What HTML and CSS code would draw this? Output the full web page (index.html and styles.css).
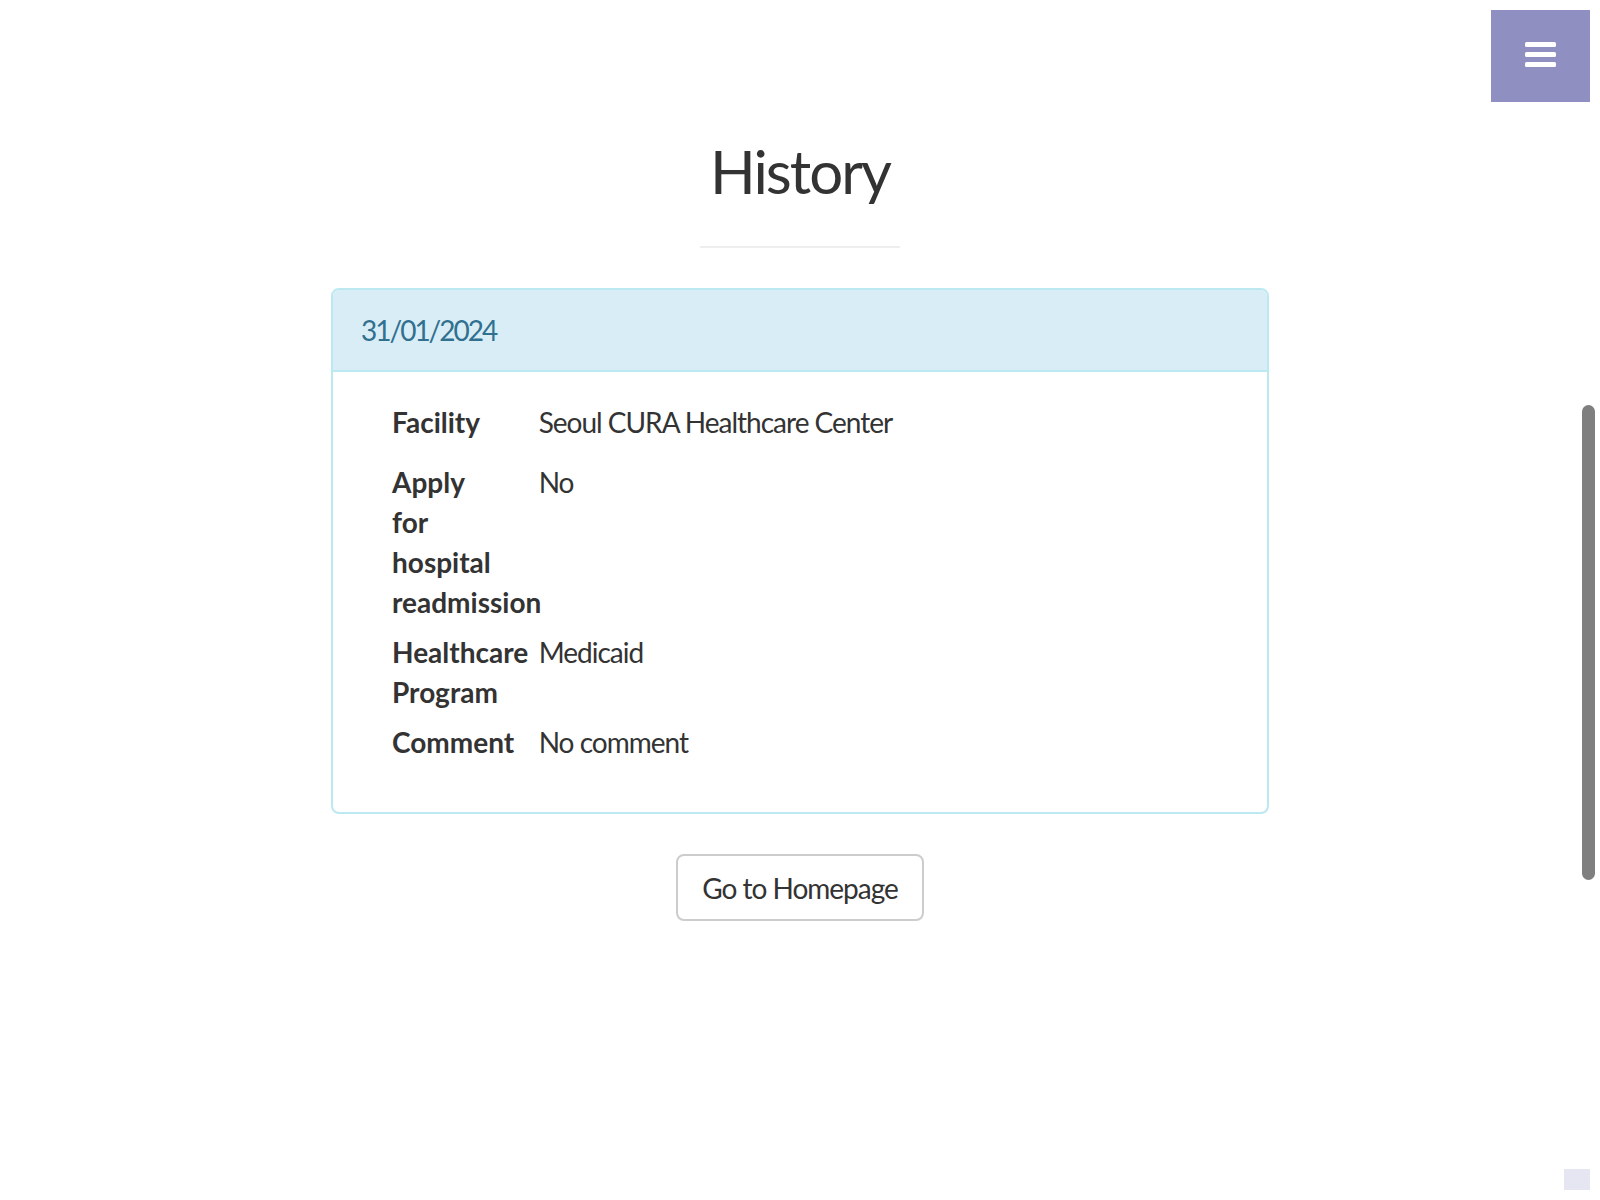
FILE: index.html
```html
<!DOCTYPE html>
<html lang="en">
<head>
<meta charset="utf-8">
<title>CURA Healthcare Service - History</title>
<link rel="stylesheet" href="styles.css">
</head>
<body>
<a class="menu-toggle" href="#" aria-label="Menu">
  <span class="bar"></span>
  <span class="bar"></span>
  <span class="bar"></span>
</a>

<section class="history">
  <h2 class="title">History</h2>
  <hr class="small">

  <div class="panel">
    <div class="panel-heading">31/01/2024</div>
    <div class="panel-body">
      <div class="item">
        <div class="label">Facility</div>
        <div class="value">Seoul CURA Healthcare Center</div>
      </div>
      <div class="item">
        <div class="label">Apply for hospital readmission</div>
        <div class="value">No</div>
      </div>
      <div class="item">
        <div class="label">Healthcare Program</div>
        <div class="value">Medicaid</div>
      </div>
      <div class="item">
        <div class="label">Comment</div>
        <div class="value">No comment</div>
      </div>
    </div>
  </div>

  <div class="actions">
    <a class="btn" href="#">Go to Homepage</a>
  </div>
</section>

<div class="scroll-thumb"></div>
<a class="to-top" href="#" aria-label="Back to top"></a>
</body>
</html>
```

FILE: styles.css
```css
html, body {
  margin: 0;
  padding: 0;
  background: #ffffff;
}

body {
  font-family: "Lato", "Liberation Sans", sans-serif;
  font-size: 28px;
  line-height: 40px;
  color: #333333;
  height: 1200px;
  overflow: hidden;
}

.menu-toggle {
  position: fixed;
  top: 10px;
  right: 10px;
  width: 99px;
  height: 92px;
  background: #8f8fc2;
  display: flex;
  flex-direction: column;
  align-items: center;
  padding-top: 32px;
  box-sizing: border-box;
  gap: 5px;
}

.menu-toggle .bar {
  display: block;
  width: 31px;
  height: 5px;
  background: #ffffff;
  border-radius: 1.5px;
}

.history {
  display: flex;
  flex-direction: column;
  align-items: center;
  padding-top: 138px;
}

.title {
  margin: 0;
  font-size: 60px;
  line-height: 66px;
  font-weight: 400;
  letter-spacing: -2px;
  color: #333333;
}

hr.small {
  width: 200px;
  margin: 42px 0 40px;
  border: 0;
  border-top: 2px solid #eeeeee;
  height: 0;
}

.panel {
  width: 938px;
  box-sizing: border-box;
  border: 2px solid #bce8f1;
  border-radius: 8px;
  background: #ffffff;
}

.panel-heading {
  background: #d9edf7;
  color: #31708f;
  padding: 20px 28px;
  letter-spacing: -2px;
  border-bottom: 2px solid #bce8f1;
  border-radius: 6px 6px 0 0;
}

.panel-body {
  padding: 30px;
}

.item {
  display: grid;
  grid-template-columns: 145.67px 1fr;
  align-items: start;
}

.label {
  padding: 0 30px 0 29px;
  font-weight: 700;
  margin-bottom: 10px;
  overflow: visible;
}

.value {
  padding-left: 30px;
  margin-bottom: 20px;
  letter-spacing: -1px;
}

.actions {
  margin-top: 40px;
  display: flex;
  justify-content: center;
}

.btn {
  display: inline-block;
  padding: 12px 24px 11px;
  border: 2px solid #cccccc;
  border-radius: 8px;
  color: #333333;
  text-decoration: none;
  letter-spacing: -1px;
  background: #ffffff;
}

.scroll-thumb {
  position: fixed;
  left: 1582px;
  top: 405px;
  width: 13px;
  height: 475px;
  border-radius: 7px;
  background: #7f7f7f;
}

.to-top {
  position: fixed;
  left: 1564px;
  top: 1169px;
  width: 26px;
  height: 21px;
  background: #e6e6f2;
}
```
